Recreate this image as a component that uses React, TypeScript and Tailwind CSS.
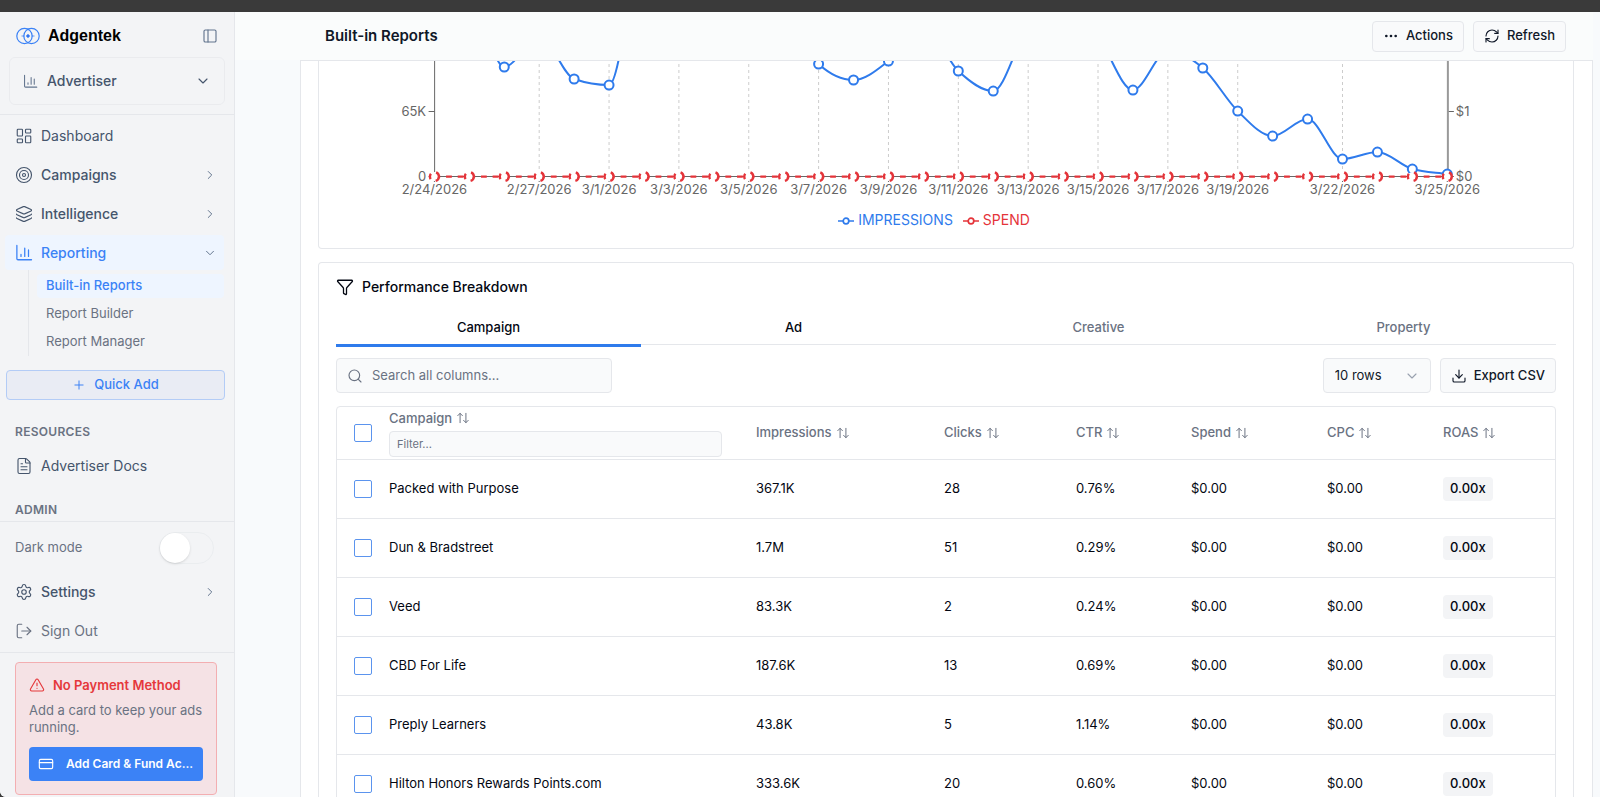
import type { ReactNode } from 'react';
import {
	ArrowUpDown,
	ChevronDown,
	ChevronRight,
	CreditCard,
	Download,
	Ellipsis,
	FileText,
	Filter,
	Layers,
	LayoutDashboard,
	LogOut,
	PanelLeft,
	Plus,
	RefreshCw,
	Search,
	Settings,
	Target,
	TriangleAlert,
} from 'lucide-react';

const BLUE = '#2f7bec';
const RED = '#e5343a';

// one y per day; the upper part of the plot is scrolled under the header
const impressions = [
	-20, -65, 6, -25, 18, 24, -130, -160, -150, -140, -90, 3, 19, 0, -35, 10, 30,
	-31, -45, -23, 29, -10, 7, 50, 75, 58, 98, 91, 108, 113,
];

const ticks: [number, string][] = [
	[0, '2/24/2026'],
	[3, '2/27/2026'],
	[5, '3/1/2026'],
	[7, '3/3/2026'],
	[9, '3/5/2026'],
	[11, '3/7/2026'],
	[13, '3/9/2026'],
	[15, '3/11/2026'],
	[17, '3/13/2026'],
	[19, '3/15/2026'],
	[21, '3/17/2026'],
	[23, '3/19/2026'],
	[26, '3/22/2026'],
	[29, '3/25/2026'],
];

const STEP = 34.9;
const xAt = (i: number) => 115.3 + i * STEP;

// monotone cubic through the points
function monotonePath(ys: number[]) {
	const d = ys.slice(1).map((y, i) => (y - ys[i]) / STEP);
	const m = ys.map((_, i) => {
		if (i === 0) return d[0];
		if (i === ys.length - 1) return d[i - 1];
		if (d[i - 1] * d[i] <= 0) return 0;
		const p = (d[i - 1] + d[i]) / 2;
		return (
			Math.sign(p) *
			Math.min(2 * Math.abs(d[i - 1]), 2 * Math.abs(d[i]), Math.abs(p))
		);
	});
	let path = `M${xAt(0)},${ys[0]}`;
	for (let i = 1; i < ys.length; i++) {
		const h = STEP / 3;
		path += `C${xAt(i - 1) + h},${ys[i - 1] + m[i - 1] * h},${xAt(i) - h},${ys[i] - m[i] * h},${xAt(i)},${ys[i]}`;
	}
	return path;
}

function BarsIcon({ className }: { className: string }) {
	return (
		<svg
			viewBox="0 0 24 24"
			fill="none"
			stroke="currentColor"
			strokeWidth="1.7"
			strokeLinecap="round"
			strokeLinejoin="round"
			className={className}
		>
			<path d="M2.500 2v17.500a1.500 1.500 0 0 0 1.500 1.500H22" />
			<path d="M8 16.500v-2.500M13 16.500V5.500M18 16.500V8" />
		</svg>
	);
}

function Logo() {
	return (
		<svg viewBox="0 0 24 18" fill="none" stroke="#3b82f6" className="h-[18px] w-6">
			<circle cx="8.500" cy="9" r="7.700" strokeWidth="1.200" />
			<circle cx="15.500" cy="9" r="7.700" strokeWidth="1.200" />
			<path d="M5.500 9h3M15.500 9h3" strokeWidth="0.800" />
			<circle cx="12" cy="9" r="1.300" fill="#2563eb" />
		</svg>
	);
}

function PerformanceChart() {
	return (
		<svg viewBox="0 0 1253 187" className="block w-full font-[Inter,sans-serif]">
			<g stroke="#ccc" strokeDasharray="3 3">
				{ticks.slice(1, -1).map(([i]) => (
					<line key={i} x1={xAt(i)} x2={xAt(i)} y1="-3" y2="115" />
				))}
			</g>
			<g stroke="#666" fill="none">
				<path d="M115.500 0V115.500H1127.500" />
				<path d="M109.500 50.500h6M109.500 115.500h6M1128 50.500h6M1128 115.500h6" />
				{ticks.map(([i]) => (
					<line key={i} x1={xAt(i)} x2={xAt(i)} y1="115" y2="121" />
				))}
			</g>
			<line x1="1128" x2="1128" y1="0" y2="115" stroke="#999" strokeWidth="2" />
			<g fill="#666" fontSize="13" textAnchor="end">
				<text x="107" y="55">65K</text>
				<text x="107" y="120">0</text>
			</g>
			<g fill="#666" fontSize="13">
				<text x="1136" y="55">$1</text>
				<text x="1136" y="120">$0</text>
			</g>
			<g fill="#666" fontSize="13" textAnchor="middle">
				{ticks.map(([i, label]) => (
					<text key={i} x={xAt(i)} y="133">{label}</text>
				))}
			</g>
			<path d={monotonePath(impressions)} fill="none" stroke={BLUE} strokeWidth="2" />
			<g fill="#fff" stroke={BLUE} strokeWidth="2">
				{impressions.map((y, i) => (
					<circle key={i} cx={xAt(i)} cy={y} r="4.500" />
				))}
			</g>
			<g fill="#fff" stroke={RED} strokeWidth="2.400">
				<line
					x1={xAt(0)}
					x2={xAt(29)}
					y1="115.500"
					y2="115.500"
					strokeDasharray="5.800 5.830"
				/>
				{impressions.map((_, i) => (
					<circle key={i} cx={xAt(i)} cy="115.500" r="4.500" strokeDasharray="5.600 5.600" />
				))}
			</g>
		</svg>
	);
}

function LegendItem({ color, label }: { color: string; label: string }) {
	return (
		<li className="flex items-center gap-1" style={{ color }}>
			<svg viewBox="0 0 16 16" fill="none" stroke="currentColor" strokeWidth="1.700" className="size-4">
				<path d="M0 9h5M11 9h5" />
				<circle cx="8" cy="9" r="2.800" />
			</svg>
			{label}
		</li>
	);
}

function NavItem({
	icon,
	label,
	chevron,
	className = 'text-slate-600',
}: {
	icon: ReactNode;
	label: string;
	chevron?: ReactNode;
	className?: string;
}) {
	return (
		<a
			href="#"
			className={`flex h-[35px] items-center gap-2 rounded pr-[7px] pl-2.5 text-sm ${className}`}
		>
			{icon}
			<span className="flex-1">{label}</span>
			{chevron}
		</a>
	);
}

function Sidebar() {
	const iconClass = 'size-[18px]';
	const right = <ChevronRight strokeWidth={1.7} className="size-3.5 text-slate-500" />;
	const sectionClass = 'px-[15px] text-xs font-semibold tracking-wide text-gray-500';
	return (
		<aside className="flex w-[235px] shrink-0 flex-col border-r border-gray-200 bg-[#f3f4f6]">
			<div className="flex h-[45px] items-center px-4 pt-0.5">
				<Logo />
				<span className="ml-2 flex-1 font-['Liberation_Sans',sans-serif] text-base font-bold text-black">
					Adgentek
				</span>
				<button type="button" aria-label="Collapse sidebar">
					<PanelLeft strokeWidth={1.7} className="size-4 text-slate-500" />
				</button>
			</div>
			<div className="border-b border-gray-200 px-[9px] pb-[9px]">
				<button
					type="button"
					className="flex h-12 w-full items-center gap-[9px] rounded-md border border-gray-200/70 px-[13px] text-left text-sm font-medium text-slate-600"
				>
					<BarsIcon className="size-[15px] text-slate-500" />
					<span className="flex-1">Advertiser</span>
					<ChevronDown strokeWidth={1.7} className="size-4" />
				</button>
			</div>

			<div className="min-h-0 flex-1 overflow-hidden border-b border-gray-200 pt-[3px]">
				<nav className="flex flex-col gap-1 pr-[10px] pl-[5px]">
					<NavItem
						icon={<LayoutDashboard strokeWidth={1.5} className={iconClass} />}
						label="Dashboard"
					/>
					<NavItem
						icon={<Target strokeWidth={1.5} className={iconClass} />}
						label="Campaigns"
						chevron={right}
						className="font-medium text-slate-600"
					/>
					<NavItem
						icon={<Layers strokeWidth={1.5} className={iconClass} />}
						label="Intelligence"
						chevron={right}
						className="font-medium text-slate-600"
					/>
					<NavItem
						icon={<BarsIcon className={iconClass} />}
						label="Reporting"
						chevron={<ChevronDown strokeWidth={1.7} className="size-3.5 text-slate-500" />}
						className="bg-[#eef5ff] font-medium text-[#3b82f6]"
					/>
				</nav>
				<div className="mr-[10px] ml-7 flex flex-col gap-1 border-l border-gray-200 pt-1 pb-0.5 pl-2 text-[13px] text-gray-500">
					<a href="#" className="flex h-6 items-center rounded bg-[#eef5ff] px-[9px] font-medium text-[#3b82f6]">
						Built-in Reports
					</a>
					<a href="#" className="flex h-6 items-center px-[9px]">Report Builder</a>
					<a href="#" className="flex h-6 items-center px-[9px]">Report Manager</a>
				</div>
				<div className="mt-3.5 pr-[9px] pl-[6px]">
					<button
						type="button"
						className="flex h-[30px] w-full items-center justify-center gap-2 rounded border border-[#b3ccf6] bg-[#e9ecf4] text-[13px] font-medium text-[#3b82f6]"
					>
						<Plus strokeWidth={1.7} className="size-3.5" />
						Quick Add
					</button>
				</div>
				<h2 className={`mt-6 ${sectionClass}`}>RESOURCES</h2>
				<nav className="mt-2 pr-[10px] pl-[5px]">
					<NavItem
						icon={<FileText strokeWidth={1.5} className={iconClass} />}
						label="Advertiser Docs"
					/>
				</nav>
				<h2 className={`mt-[19px] ${sectionClass}`}>ADMIN</h2>
			</div>

			<div className="border-b border-gray-200 pt-2.5 pb-1">
				<label className="flex h-8 items-center justify-between pr-5 pl-[15px] text-[13px] text-gray-500">
					Dark mode
					<input type="checkbox" role="switch" className="sr-only" />
					<span className="flex h-8 w-[55px] items-center rounded-full border border-gray-200/60">
						<span className="size-[30px] rounded-full bg-white shadow" />
					</span>
				</label>
				<nav className="mt-2.5 flex flex-col gap-1 pr-[10px] pl-[5px]">
					<NavItem
						icon={<Settings strokeWidth={1.5} className={iconClass} />}
						label="Settings"
						chevron={right}
						className="font-medium text-slate-600"
					/>
					<NavItem
						icon={<LogOut strokeWidth={1.5} className={iconClass} />}
						label="Sign Out"
						className="text-gray-500"
					/>
				</nav>
			</div>

			<section className="mt-[9px] mr-[17px] mb-0.5 ml-[15px] rounded border border-[#f3aeb1] bg-[#f5e2e5] p-[13px] pt-3">
				<h2 className="flex items-center gap-2 text-[13px] leading-5 font-semibold text-[#e5383b]">
					<TriangleAlert strokeWidth={1.7} className="size-4" />
					No Payment Method
				</h2>
				<p className="mt-[7px] text-[13px] leading-[17px] whitespace-nowrap text-gray-500">
					Add a card to keep your ads
					<br />
					running.
				</p>
				<button
					type="button"
					className="mt-[11px] flex h-[34px] w-full items-center gap-3 rounded bg-[#3b82f6] px-[9px] text-xs font-semibold whitespace-nowrap text-white"
				>
					<CreditCard strokeWidth={1.7} className="size-4 shrink-0" />
					Add Card &amp; Fund Ac...
				</button>
			</section>
		</aside>
	);
}

const columns = ['Impressions', 'Clicks', 'CTR', 'Spend', 'CPC', 'ROAS'];

const rows = [
	['Packed with Purpose', '367.1K', '28', '0.76%'],
	['Dun & Bradstreet', '1.7M', '51', '0.29%'],
	['Veed', '83.3K', '2', '0.24%'],
	['CBD For Life', '187.6K', '13', '0.69%'],
	['Preply Learners', '43.8K', '5', '1.14%'],
	['Hilton Honors Rewards Points.com', '333.6K', '20', '0.60%'],
];

function SortLabel({ label }: { label: string }) {
	return (
		<button type="button" className="flex items-center gap-1">
			{label}
			<ArrowUpDown strokeWidth={1.7} className="size-3.5" />
		</button>
	);
}

function CheckBox({ label }: { label: string }) {
	return (
		<input
			type="checkbox"
			aria-label={label}
			className="block size-[18px] appearance-none rounded-[2px] border border-[#5b94ee] bg-white"
		/>
	);
}

function BreakdownTable() {
	return (
		<div className="mt-[13px] rounded-t border border-gray-200">
			<table className="w-full table-fixed text-left text-[13px] text-gray-950">
				<colgroup>
					<col className="w-[35px]" />
					<col className="w-[367px]" />
					<col className="w-[188px]" />
					<col className="w-[132px]" />
					<col className="w-[115px]" />
					<col className="w-[136px]" />
					<col className="w-[116px]" />
					<col className="w-[129px]" />
				</colgroup>
				<thead className="text-gray-500">
					<tr className="h-[52px] border-b border-gray-200">
						<th className="pl-[17px]">
							<CheckBox label="Select all rows" />
						</th>
						<th className="px-[17px] font-medium">
							<SortLabel label="Campaign" />
							<input
								type="text"
								aria-label="Filter campaigns"
								placeholder="Filter..."
								className="mt-[3px] block h-[26px] w-full rounded border border-gray-200 bg-[#f9fafb] px-[7px] text-[11px] font-normal placeholder:text-gray-500"
							/>
						</th>
						{columns.map((name) => (
							<th key={name} className="px-[17px] font-medium">
								<SortLabel label={name} />
							</th>
						))}
					</tr>
				</thead>
				<tbody>
					{rows.map(([name, shown, clicks, ctr]) => (
						<tr key={name} className="h-[59px] border-b border-gray-200">
							<td className="pl-[17px]">
								<CheckBox label={`Select ${name}`} />
							</td>
							<td className="px-[17px]">{name}</td>
							<td className="px-[17px]">{shown}</td>
							<td className="px-[17px]">{clicks}</td>
							<td className="px-[17px]">{ctr}</td>
							<td className="px-[17px]">$0.00</td>
							<td className="px-[17px]">$0.00</td>
							<td className="px-[17px]">
								<span className="inline-flex h-6 items-center rounded bg-gray-100 px-[7px] font-medium">
									0.00x
								</span>
							</td>
						</tr>
					))}
				</tbody>
			</table>
		</div>
	);
}

export default function App() {
	const buttonClass =
		'flex items-center gap-[7px] rounded border border-gray-200 bg-[#f9fafb] px-2.5 text-[13px] font-medium text-gray-900';
	const tabClass = 'h-[33px] flex-1 font-medium';

	return (
		<div className="flex h-screen flex-col overflow-hidden bg-[#3a3a3a] font-[Inter,sans-serif]">
			<div className="h-3 shrink-0" />
			<div className="flex min-h-0 flex-1 overflow-hidden rounded-bl-md bg-[#f8fafc]">
				<Sidebar />
				<main className="flex min-w-0 flex-1 flex-col pr-[7px]">
					<header className="flex h-12 shrink-0 items-center gap-[9px] bg-[#fafcfc] pr-[27px] pl-[90px]">
						<h1 className="flex-1 text-[15px] font-semibold text-gray-900">Built-in Reports</h1>
						<button type="button" className={`h-[31px] ${buttonClass}`}>
							<Ellipsis className="size-4" />
							Actions
						</button>
						<button type="button" className={`h-[31px] ${buttonClass}`}>
							<RefreshCw strokeWidth={1.7} className="size-4" />
							Refresh
						</button>
					</header>

					<div className="ml-[65px] min-h-0 flex-1 overflow-hidden border border-b-0 border-gray-200 bg-white pr-[18px] pl-[17px]">
						<section className="relative rounded-b border border-t-0 border-gray-200">
							<PerformanceChart />
							<ul className="absolute inset-x-0 bottom-[18px] flex justify-center gap-2.5 pr-6 text-sm leading-5">
								<LegendItem color={BLUE} label="IMPRESSIONS" />
								<LegendItem color={RED} label="SPEND" />
							</ul>
						</section>

						<section className="mt-[13px] rounded-t border border-b-0 border-gray-200 px-[17px]">
							<h2 className="flex h-12 items-center gap-2 text-sm font-medium text-gray-950">
								<Filter strokeWidth={1.7} className="size-[18px]" />
								Performance Breakdown
							</h2>
							<div className="flex border-b border-gray-200 text-[13px] text-gray-500">
								<button
									type="button"
									className="-mb-[3px] h-9 flex-1 border-b-[3px] border-[#2f7bec] font-medium text-gray-950"
								>
									Campaign
								</button>
								<button type="button" className={`text-gray-950 ${tabClass}`}>Ad</button>
								<button type="button" className={tabClass}>Creative</button>
								<button type="button" className={tabClass}>Property</button>
							</div>
							<div className="mt-[13px] flex gap-[9px]">
								<label className="flex h-[35px] w-[276px] items-center gap-[9px] rounded border border-gray-200 bg-[#f9fafb] px-2.5">
									<Search strokeWidth={1.7} className="size-4 text-gray-500" />
									<input
										type="text"
										aria-label="Search all columns"
										placeholder="Search all columns..."
										className="min-w-0 flex-1 text-[13px] placeholder:text-gray-500"
									/>
								</label>
								<div className="relative ml-auto w-[108px]">
									<select
										aria-label="Rows per page"
										className="h-[35px] w-full appearance-none rounded border border-gray-200 bg-[#f9fafb] pl-[11px] text-[13px] text-gray-900"
									>
										<option>10 rows</option>
									</select>
									<ChevronDown
										strokeWidth={1.7}
										className="pointer-events-none absolute top-2.5 right-[11px] size-4 text-gray-400"
									/>
								</div>
								<button type="button" className={`h-[35px] ${buttonClass}`}>
									<Download strokeWidth={1.7} className="size-4" />
									Export CSV
								</button>
							</div>
							<BreakdownTable />
						</section>
					</div>
				</main>
			</div>
		</div>
	);
}
